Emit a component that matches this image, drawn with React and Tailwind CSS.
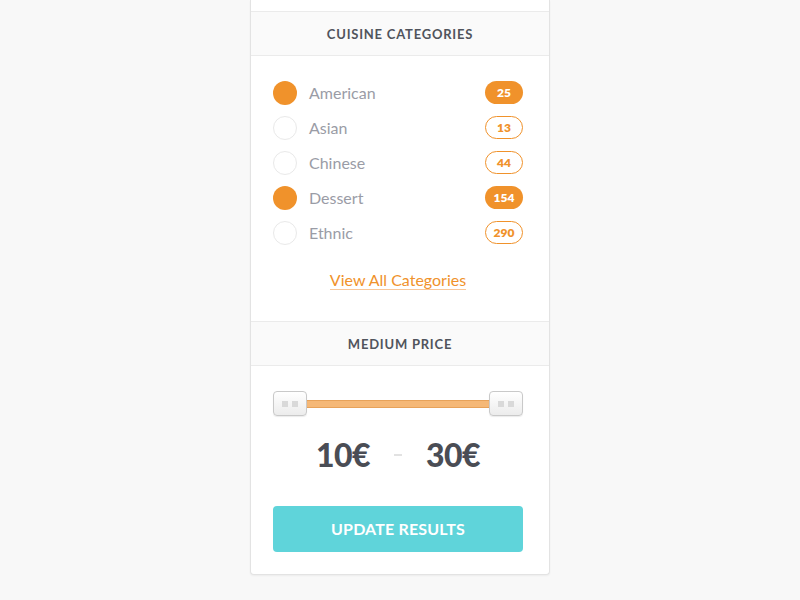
import React from "react";

const items = [
  { name: "American", count: 25, on: true },
  { name: "Asian", count: 13, on: false },
  { name: "Chinese", count: 44, on: false },
  { name: "Dessert", count: 154, on: true },
  { name: "Ethnic", count: 290, on: false },
];

function Handle() {
  return (
    <div className="w-[34px] h-[25px] rounded-[4px] border border-[#c9c9c9] bg-gradient-to-b from-white to-[#ececec] shadow-[0_1px_1px_rgba(0,0,0,0.08)] flex items-center justify-center gap-[4px] shrink-0 relative z-10">
      <span className="w-[6px] h-[6px] bg-[#d9d9d9]" />
      <span className="w-[6px] h-[6px] bg-[#d9d9d9]" />
    </div>
  );
}

export default function App() {
  return (
    <div className="min-h-[600px] w-full bg-[#f8f8f8] flex justify-center" style={{ fontFamily: "Lato, 'Open Sans', sans-serif" }}>
      <div className="w-[300px] h-[575px] bg-white border-x border-b border-[#e3e3e3] rounded-b-[4px] shadow-[0_1px_2px_rgba(0,0,0,0.05)] flex flex-col">
        <div className="h-[12px] border-b border-[#ebebeb]" />
        <div className="h-[44px] pt-[2px] bg-[#fafafa] border-b border-[#ebebeb] flex items-center justify-center">
          <span className="text-[13px] font-bold tracking-[0.06em] text-[#50545c]">CUISINE CATEGORIES</span>
        </div>
        <div className="pl-[22px] pr-[26px] pt-[19px] pb-[31px] flex flex-col">
          {items.map((it) => (
            <div key={it.name} className="h-[35px] flex items-center">
              {it.on ? (
                <span className="w-[24px] h-[24px] rounded-full bg-[#f0922b]" />
              ) : (
                <span className="w-[24px] h-[24px] rounded-full border border-[#e9e9e9] bg-white" />
              )}
              <span className="ml-[12px] text-[16px] text-[#9a9ca6] flex-1">{it.name}</span>
              {it.on ? (
                <span className="w-[38px] h-[23px] rounded-full bg-[#f0922b] text-white text-[12px] font-extrabold flex items-center justify-center">{it.count}</span>
              ) : (
                <span className="w-[38px] h-[23px] rounded-full border border-[#f0922b] text-[#f0922b] text-[12px] font-extrabold flex items-center justify-center">{it.count}</span>
              )}
            </div>
          ))}
          <div className="mt-[20px] h-[20px] flex justify-center">
            <span className="text-[16px] leading-[20px] text-[#f0922b] border-b border-[#f8c79a]">View All Categories</span>
          </div>
        </div>
        <div className="h-[45px] pt-[2px] bg-[#fafafa] border-y border-[#ebebeb] flex items-center justify-center">
          <span className="text-[13px] font-bold tracking-[0.06em] text-[#50545c]">MEDIUM PRICE</span>
        </div>
        <div className="pl-[22px] pr-[26px] pt-[25px] flex flex-col">
          <div className="flex items-center">
            <Handle />
            <div className="flex-1 h-[8px] bg-[#f5b877] border-y border-[#e7a25a] -mx-[1px]" />
            <Handle />
          </div>
          <div className="mt-[21px] h-[36px] flex items-center justify-center">
            <span className="w-[80px] text-center text-[32px] font-black text-[#4a4d55] tracking-[-0.02em]">10€</span>
            <span className="mx-[11px] w-[8px] h-[2px] bg-[#e2e2e2]" />
            <span className="w-[80px] text-center text-[32px] font-black text-[#4a4d55] tracking-[-0.02em]">30€</span>
          </div>
          <button className="mt-[33px] h-[46px] w-full rounded-[4px] bg-[#5fd4da] text-white text-[16px] font-bold tracking-[0.01em]">
            UPDATE RESULTS
          </button>
        </div>
      </div>
    </div>
  );
}
